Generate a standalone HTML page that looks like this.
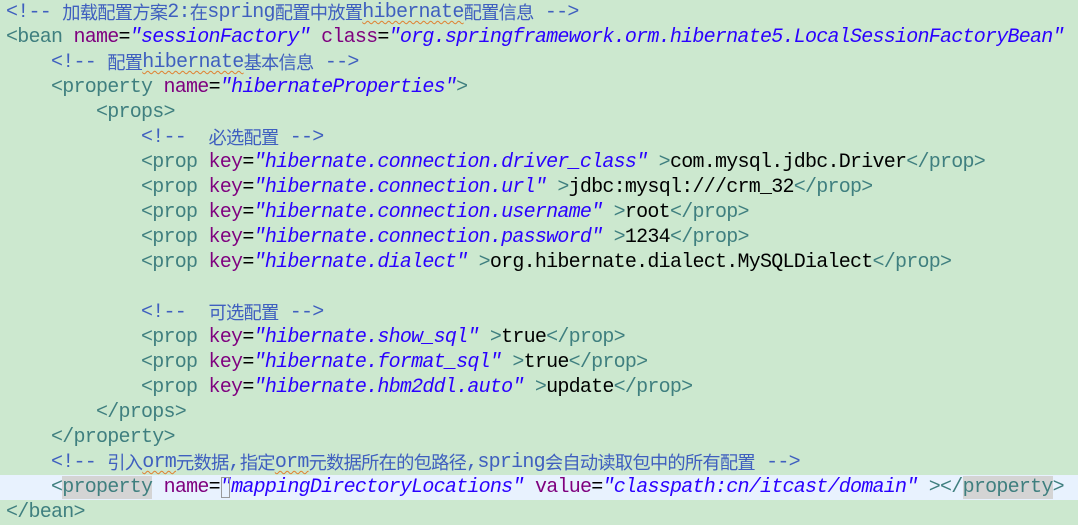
<!DOCTYPE html>
<html><head><meta charset="utf-8"><style>
html,body{margin:0;padding:0}
body{width:1078px;height:520px;background:#cce8cf;overflow:hidden;position:relative;font-family:"Liberation Mono",monospace;font-size:20px;letter-spacing:-0.75px}
.l{position:absolute;left:6px;height:25px;line-height:25px;white-space:pre;color:#000;overflow:hidden}
.t{color:#3f7f7f}.a{color:#7f007f}.v{color:#2a00ff;font-style:italic}.c{color:#3f5fbf}
.k{font-family:"Noto Sans CJK SC",sans-serif;font-size:18.25px;font-style:normal;display:inline-block;height:25px;line-height:25px;vertical-align:top}
.sq{text-decoration:underline wavy #e08030;text-decoration-thickness:1px;text-underline-offset:3px}
#hl{position:absolute;left:0;top:475px;width:1078px;height:25px;background:#e8f2fe}
</style></head><body>
<div id="hl"></div>
<div class="l" style="top:0"><span class="c">&lt;!-- <span class="k">加载配置方案</span>2:<span class="k">在</span>spring<span class="k">配置中放置</span><span class="sq">hibernate</span><span class="k">配置信息</span> --&gt;</span></div>
<div class="l" style="top:25px"><span class="t">&lt;bean </span><span class="a">name</span>=<span class="v">"sessionFactory"</span> <span class="a">class</span>=<span class="v">"org.springframework.orm.hibernate5.LocalSessionFactoryBean"</span></div>
<div class="l" style="top:50px">    <span class="c">&lt;!-- <span class="k">配置</span><span class="sq">hibernate</span><span class="k">基本信息</span> --&gt;</span></div>
<div class="l" style="top:75px">    <span class="t">&lt;property </span><span class="a">name</span>=<span class="v">"hibernateProperties"</span><span class="t">&gt;</span></div>
<div class="l" style="top:100px">        <span class="t">&lt;props&gt;</span></div>
<div class="l" style="top:125px">            <span class="c">&lt;!--  <span class="k">必选配置</span> --&gt;</span></div>
<div class="l" style="top:150px">            <span class="t">&lt;prop </span><span class="a">key</span>=<span class="v">"hibernate.connection.driver_class"</span> <span class="t">&gt;</span>com.mysql.jdbc.Driver<span class="t">&lt;/prop&gt;</span></div>
<div class="l" style="top:175px">            <span class="t">&lt;prop </span><span class="a">key</span>=<span class="v">"hibernate.connection.url"</span> <span class="t">&gt;</span>jdbc:mysql:///crm_32<span class="t">&lt;/prop&gt;</span></div>
<div class="l" style="top:200px">            <span class="t">&lt;prop </span><span class="a">key</span>=<span class="v">"hibernate.connection.username"</span> <span class="t">&gt;</span>root<span class="t">&lt;/prop&gt;</span></div>
<div class="l" style="top:225px">            <span class="t">&lt;prop </span><span class="a">key</span>=<span class="v">"hibernate.connection.password"</span> <span class="t">&gt;</span>1234<span class="t">&lt;/prop&gt;</span></div>
<div class="l" style="top:250px">            <span class="t">&lt;prop </span><span class="a">key</span>=<span class="v">"hibernate.dialect"</span> <span class="t">&gt;</span>org.hibernate.dialect.MySQLDialect<span class="t">&lt;/prop&gt;</span></div>
<div class="l" style="top:300px">            <span class="c">&lt;!--  <span class="k">可选配置</span> --&gt;</span></div>
<div class="l" style="top:325px">            <span class="t">&lt;prop </span><span class="a">key</span>=<span class="v">"hibernate.show_sql"</span> <span class="t">&gt;</span>true<span class="t">&lt;/prop&gt;</span></div>
<div class="l" style="top:350px">            <span class="t">&lt;prop </span><span class="a">key</span>=<span class="v">"hibernate.format_sql"</span> <span class="t">&gt;</span>true<span class="t">&lt;/prop&gt;</span></div>
<div class="l" style="top:375px">            <span class="t">&lt;prop </span><span class="a">key</span>=<span class="v">"hibernate.hbm2ddl.auto"</span> <span class="t">&gt;</span>update<span class="t">&lt;/prop&gt;</span></div>
<div class="l" style="top:400px">        <span class="t">&lt;/props&gt;</span></div>
<div class="l" style="top:425px">    <span class="t">&lt;/property&gt;</span></div>
<div class="l" style="top:450px">    <span class="c">&lt;!-- <span class="k">引入</span><span class="sq">orm</span><span class="k">元数据</span>,<span class="k">指定</span><span class="sq">orm</span><span class="k">元数据所在的包路径</span>,spring<span class="k">会自动读取包中的所有配置</span> --&gt;</span></div>
<div class="l" style="top:475px">    <span class="t">&lt;<span style="background:#d4d4d4">property</span> </span><span class="a">name</span>=<span style="outline:1px solid #999;outline-offset:-2px"><span class="v">"</span></span><span class="v">mappingDirectoryLocations"</span> <span class="a">value</span>=<span class="v">"classpath:cn/itcast/domain"</span> <span class="t">&gt;&lt;/<span style="background:#d4d4d4">property</span>&gt;</span></div>
<div class="l" style="top:500px"><span class="t">&lt;/bean&gt;</span></div>
</body></html>
